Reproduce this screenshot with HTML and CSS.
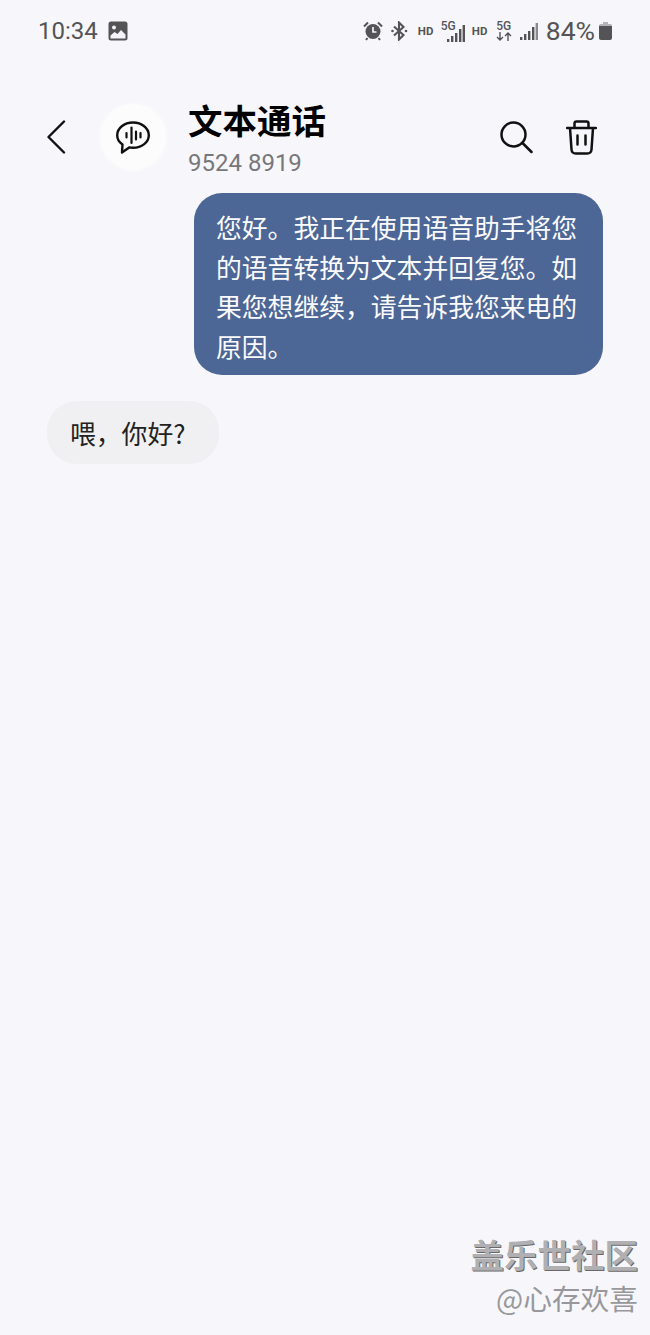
FILE: index.html
```html
<!DOCTYPE html>
<html lang="zh-CN">
<head>
    <meta charset="UTF-8">
    <meta name="viewport" content="width=device-width, initial-scale=1.0">
    <title>文本通话</title>
    <link rel="stylesheet" href="styles.css">
</head>
<body>
    <div class="page">
        <div class="status-bar">
            <div class="status-left">
                <span class="time">10:34</span>
                <svg class="pic-icon" width="20" height="20" viewBox="0 0 20 20">
                    <rect x="0.5" y="0.5" width="19" height="19" rx="2.5" fill="#545456"/>
                    <circle cx="6" cy="6.500" r="2" fill="#f4f4f8"/>
                    <path d="M2.500 17.500v-3l4-3.500 3 2 3.500-4 4.500 4.500v4z" fill="#f4f4f8"/>
                </svg>
            </div>
            <div class="status-right">
                <svg class="alarm" width="20" height="20" viewBox="0 0 20 20">
                    <circle cx="10" cy="10.500" r="7.500" fill="#545456"/>
                    <path d="M1 5.500 5 1.500M15 1.500l4 4M4.500 17l-1.500 2M15.500 17l1.500 2" stroke="#545456" stroke-width="2" fill="none"/>
                    <path d="M10 6v5h3.500" stroke="#f4f4f8" stroke-width="1.700" fill="none"/>
                </svg>
                <svg class="bt" width="17" height="20" viewBox="0 0 17 20">
                    <path d="M3 5.500 12.500 14 8 18.500v-17L12.500 6 3 14.500" stroke="#545456" stroke-width="2.100" fill="none"/>
                    <circle cx="1.500" cy="10" r="1.300" fill="#545456"/>
                    <circle cx="15" cy="10" r="1.300" fill="#545456"/>
                </svg>
                <span class="hd hd-first">HD</span>
                <div class="net net-first">
                    <span class="five-g">5G</span>
                    <svg class="bars-small" width="18" height="17" viewBox="0 0 18 17">
                        <rect x="0" y="14" width="2.400" height="3" fill="#545456"/>
                        <rect x="4" y="11" width="2.400" height="6" fill="#545456"/>
                        <rect x="8" y="8" width="2.400" height="9" fill="#545456"/>
                        <rect x="12" y="4" width="2.400" height="13" fill="#545456"/>
                        <rect x="15.600" y="0" width="2.400" height="17" fill="#545456"/>
                    </svg>
                </div>
                <span class="hd hd-second">HD</span>
                <div class="net-arrows">
                    <span class="five-g">5G</span>
                    <svg width="16" height="9" viewBox="0 0 16 9">
                        <path d="M4 0v8M1 5l3 3 3-3M12 9V1M9 4l3-3 3 3" stroke="#545456" stroke-width="1.400" fill="none"/>
                    </svg>
                </div>
                <svg class="signal" width="18" height="17" viewBox="0 0 18 17">
                    <rect x="0" y="14" width="2.400" height="3" fill="#545456"/>
                    <rect x="4" y="11" width="2.400" height="6" fill="#545456"/>
                    <rect x="8" y="8" width="2.400" height="9" fill="#545456"/>
                    <rect x="12" y="4" width="2.400" height="13" fill="#545456"/>
                    <rect x="15.600" y="0" width="2.400" height="17" fill="#8a8a8e"/>
                </svg>
                <span class="percent">84%</span>
                <svg class="battery" width="13" height="18" viewBox="0 0 13 18">
                    <path d="M4 0h5v2h2.500q1.500 0 1.500 1.500V4H0v-.5Q0 2 1.500 2H4z" fill="#b4b4b8"/>
                    <path d="M0 4h13v12q0 2-2 2H2q-2 0-2-2z" fill="#545456"/>
                </svg>
            </div>
        </div>

        <div class="header">
            <svg class="back" width="20" height="34" viewBox="0 0 20 34">
                <path d="M18 1.500 2.500 17 18 32.500" stroke="#111" stroke-width="2.400" fill="none" stroke-linecap="round" stroke-linejoin="round"/>
            </svg>
            <div class="avatar">
                <svg width="34" height="34" viewBox="0 0 34 34">
                    <path d="M6.500 24.500C3.200 22.300 1.200 19 1.200 15.200 1.200 8.200 8.200 2.500 17 2.500s15.800 5.700 15.800 12.700S25.800 27.800 17 27.800c-1.300 0-2.600-.1-3.800-.4L6 32.500z" stroke="#111" stroke-width="2.400" fill="none" stroke-linejoin="round"/>
                    <path d="M10.500 13v4.500M15.500 7.500V23M20 11.500v8M24.500 13v4.500" stroke="#111" stroke-width="2.200" stroke-linecap="round"/>
                </svg>
            </div>
            <div class="title-block">
                <h1 class="title">文本通话</h1>
                <div class="number">9524 8919</div>
            </div>
            <div class="actions">
                <svg width="33" height="33" viewBox="0 0 33 33">
                    <circle cx="13.500" cy="13.500" r="12" stroke="#111" stroke-width="2.500" fill="none"/>
                    <path d="M22.500 22 31.500 31" stroke="#111" stroke-width="2.500" stroke-linecap="round"/>
                </svg>
                <svg width="31" height="35" viewBox="0 0 31 35">
                    <path d="M1 8h29M8.500 8V3.500q0-2 2-2h10q2 0 2 2V8" stroke="#111" stroke-width="2.500" fill="none" stroke-linecap="round"/>
                    <path d="M4 8l1.500 21.500q.3 4 4.300 4h11.400q4 0 4.300-4L27 8" stroke="#111" stroke-width="2.500" fill="none"/>
                    <path d="M11.500 15.500v9M19.500 15.500v9" stroke="#111" stroke-width="2.500" stroke-linecap="round"/>
                </svg>
            </div>
        </div>

        <div class="messages">
            <div class="bubble bubble-out">您好。我正在使用语音助手将您的语音转换为文本并回复您。如果您想继续，请告诉我您来电的原因。</div>
            <div class="bubble bubble-in">喂，你好?</div>
        </div>

        <div class="watermark">
            <div class="wm-top">盖乐世社区</div>
            <div class="wm-bottom">@心存欢喜</div>
        </div>
    </div>
</body>
</html>
```

FILE: styles.css
```css
* {
    box-sizing: border-box;
}
body {
    margin: 0;
    background-color: #f7f7fb;
    font-family: "Noto Sans CJK SC", "Noto Sans", sans-serif;
}
.page {
    position: relative;
    width: 650px;
    height: 1335px;
    overflow: hidden;
}
.status-bar {
    display: flex;
    justify-content: space-between;
    align-items: center;
    height: 26px;
    margin-top: 18px;
    padding: 0 38px;
    color: #545456;
    font-family: Roboto, "Liberation Sans", sans-serif;
}
.status-left {
    display: flex;
    align-items: center;
    gap: 10px;
}
.time {
    font-size: 24px;
    line-height: 26px;
}
.status-right {
    display: flex;
    align-items: center;
}
.bt {
    margin-left: 8px;
}
.hd {
    font-size: 11.5px;
    font-weight: 700;
    width: 16px;
}
.hd-first {
    margin-left: 10px;
}
.net {
    position: relative;
    width: 24px;
    height: 20px;
    margin-left: 7px;
}
.five-g {
    display: block;
    font-size: 12px;
    line-height: 11px;
    font-weight: 500;
}
.bars-small {
    position: absolute;
    right: 0;
    bottom: -1px;
}
.hd-second {
    margin-left: 7px;
}
.net-arrows {
    display: flex;
    flex-direction: column;
    align-items: center;
    width: 16px;
    margin-left: 8px;
}
.signal {
    margin-left: 8px;
}
.percent {
    margin-left: 8px;
    font-size: 26.5px;
    line-height: 26px;
}
.battery {
    margin-left: 4px;
}
.header {
    display: flex;
    align-items: center;
    height: 74px;
    margin-top: 56px;
    padding-left: 46px;
}
.avatar {
    display: flex;
    justify-content: center;
    align-items: center;
    width: 66px;
    height: 66px;
    margin-left: 34px;
    border-radius: 50%;
    background-color: #fcfcfd;
    box-shadow: 0 0 4px #fcfcfd;
}
.title-block {
    margin-left: 22px;
    padding-top: 2px;
}
.title {
    margin: 0;
    font-size: 34.5px;
    line-height: 40px;
    font-weight: 700;
    color: #000;
}
.number {
    margin-top: 9px;
    font-family: Roboto, "Liberation Sans", sans-serif;
    font-size: 24px;
    line-height: 30px;
    color: #77777a;
}
.actions {
    display: flex;
    align-items: center;
    gap: 33px;
    margin-left: auto;
    margin-right: 53px;
}
.messages {
    display: flex;
    flex-direction: column;
    gap: 26px;
    margin-top: 19px;
    padding: 0 47px;
}
.bubble {
    font-size: 25.8px;
    line-height: 39.5px;
}
.bubble-out {
    align-self: flex-end;
    width: 409px;
    padding: 14px 22px 10px;
    border-radius: 28px;
    background-color: #4c6695;
    color: #fbfbfd;
}
.bubble-in {
    align-self: flex-start;
    width: 172px;
    height: 63px;
    padding: 12px 23px;
    border-radius: 30px;
    background-color: #f0f0f2;
    color: #222;
}
.watermark {
    position: absolute;
    right: 12px;
    top: 1232px;
    text-align: right;
}
.wm-top {
    font-size: 33.5px;
    line-height: 44px;
    font-weight: 700;
    color: #b0b0b2;
    text-shadow: 1px 1px 0 #68686a;
}
.wm-bottom {
    font-size: 28.700px;
    line-height: 44px;
    color: #98989c;
}
```
